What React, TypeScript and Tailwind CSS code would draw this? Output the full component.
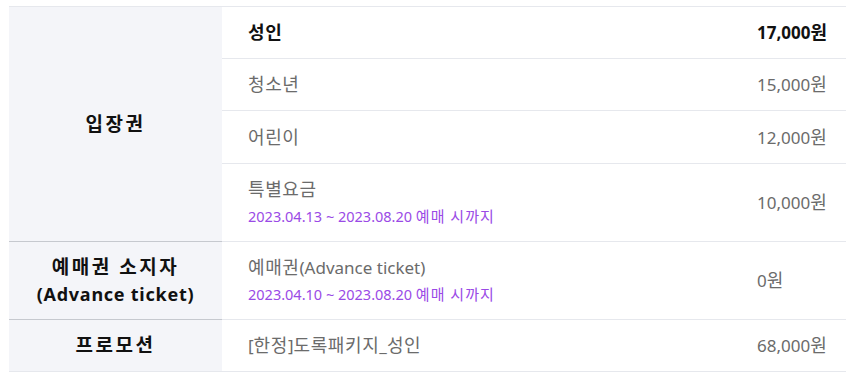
import React from "react";

type Row = {
  label: string;
  sub?: string;
  price: string;
  bold?: boolean;
  h: string;
};

type Group = {
  title: string[];
  rows: Row[];
  headBorder: string;
};

const groups: Group[] = [
  {
    title: ["입장권"],
    headBorder: "border-[#c6c9cf]",
    rows: [
      { label: "성인", price: "17,000원", bold: true, h: "h-[52px]" },
      { label: "청소년", price: "15,000원", h: "h-[52px]" },
      { label: "어린이", price: "12,000원", h: "h-[53px]" },
      {
        label: "특별요금",
        sub: "2023.04.13 ~ 2023.08.20 예매 시까지",
        price: "10,000원",
        h: "h-[78px]",
      },
    ],
  },
  {
    title: ["예매권 소지자", "(Advance ticket)"],
    headBorder: "border-[#c6c9cf]",
    rows: [
      {
        label: "예매권(Advance ticket)",
        sub: "2023.04.10 ~ 2023.08.20 예매 시까지",
        price: "0원",
        h: "h-[78px]",
      },
    ],
  },
  {
    title: ["프로모션"],
    headBorder: "border-[#e6e8ed]",
    rows: [{ label: "[한정]도록패키지_성인", price: "68,000원", h: "h-[52px]" }],
  },
];

const KO = /([\uAC00-\uD7A3]+(?: [\uAC00-\uD7A3]+)*)/;

function Mixed({ text, ko, la }: { text: string; ko: string; la: string }) {
  const parts = text.split(KO).filter((p) => p.length > 0);
  return (
    <>
      {parts.map((p, i) =>
        /[\uAC00-\uD7A3]/.test(p) ? (
          <span key={i} className={ko}>
            {p}
          </span>
        ) : (
          <span key={i} className={la}>
            {p}
          </span>
        )
      )}
    </>
  );
}

export default function App() {
  return (
    <div
      className="w-[846px] h-[378px] bg-white pl-[9px] pt-[6px]"
      style={{ fontFamily: '"Noto Sans", "Noto Sans CJK KR", sans-serif' }}
    >
      <div className="w-[837px] border-t border-[#e6e8ed]">
        {groups.map((g, gi) => (
          <div key={gi} className="flex">
            <div
              className={`w-[213px] shrink-0 bg-[#f4f5f9] border-b ${g.headBorder} flex flex-col items-center justify-center leading-[26px] font-bold text-[#111]`}
            >
              {g.title.map((t, ti) => (
                <div key={ti}>
                  <Mixed
                    text={t}
                    ko="text-[19px] tracking-[2.5px]"
                    la="text-[18px] tracking-[0.75px]"
                  />
                </div>
              ))}
            </div>
            <div className="flex-1 flex flex-col">
              {g.rows.map((r, ri) => (
                <div
                  key={ri}
                  className={`${r.h} flex items-center border-b border-[#e6e8ed]`}
                >
                  <div className="flex-1 pl-[26px] flex flex-col justify-center">
                    <div
                      className={`leading-[26px] ${
                        r.bold ? "font-bold text-[#111]" : "text-[#6b6b6b]"
                      }`}
                    >
                      <Mixed
                        text={r.label}
                        ko="text-[18px] tracking-[0.6px]"
                        la="text-[17px]"
                      />
                    </div>
                    {r.sub && (
                      <div className="leading-[26px] text-[#9a4ae6]">
                        <Mixed
                          text={r.sub}
                          ko="text-[15px] tracking-[1px]"
                          la="text-[14.5px]"
                        />
                      </div>
                    )}
                  </div>
                  <div
                    className={`w-[89px] shrink-0 leading-[26px] ${
                      r.bold ? "font-bold text-[#111]" : "text-[#6b6b6b]"
                    }`}
                  >
                    <Mixed text={r.price} ko="text-[18px]" la="text-[17px]" />
                  </div>
                </div>
              ))}
            </div>
          </div>
        ))}
      </div>
    </div>
  );
}
